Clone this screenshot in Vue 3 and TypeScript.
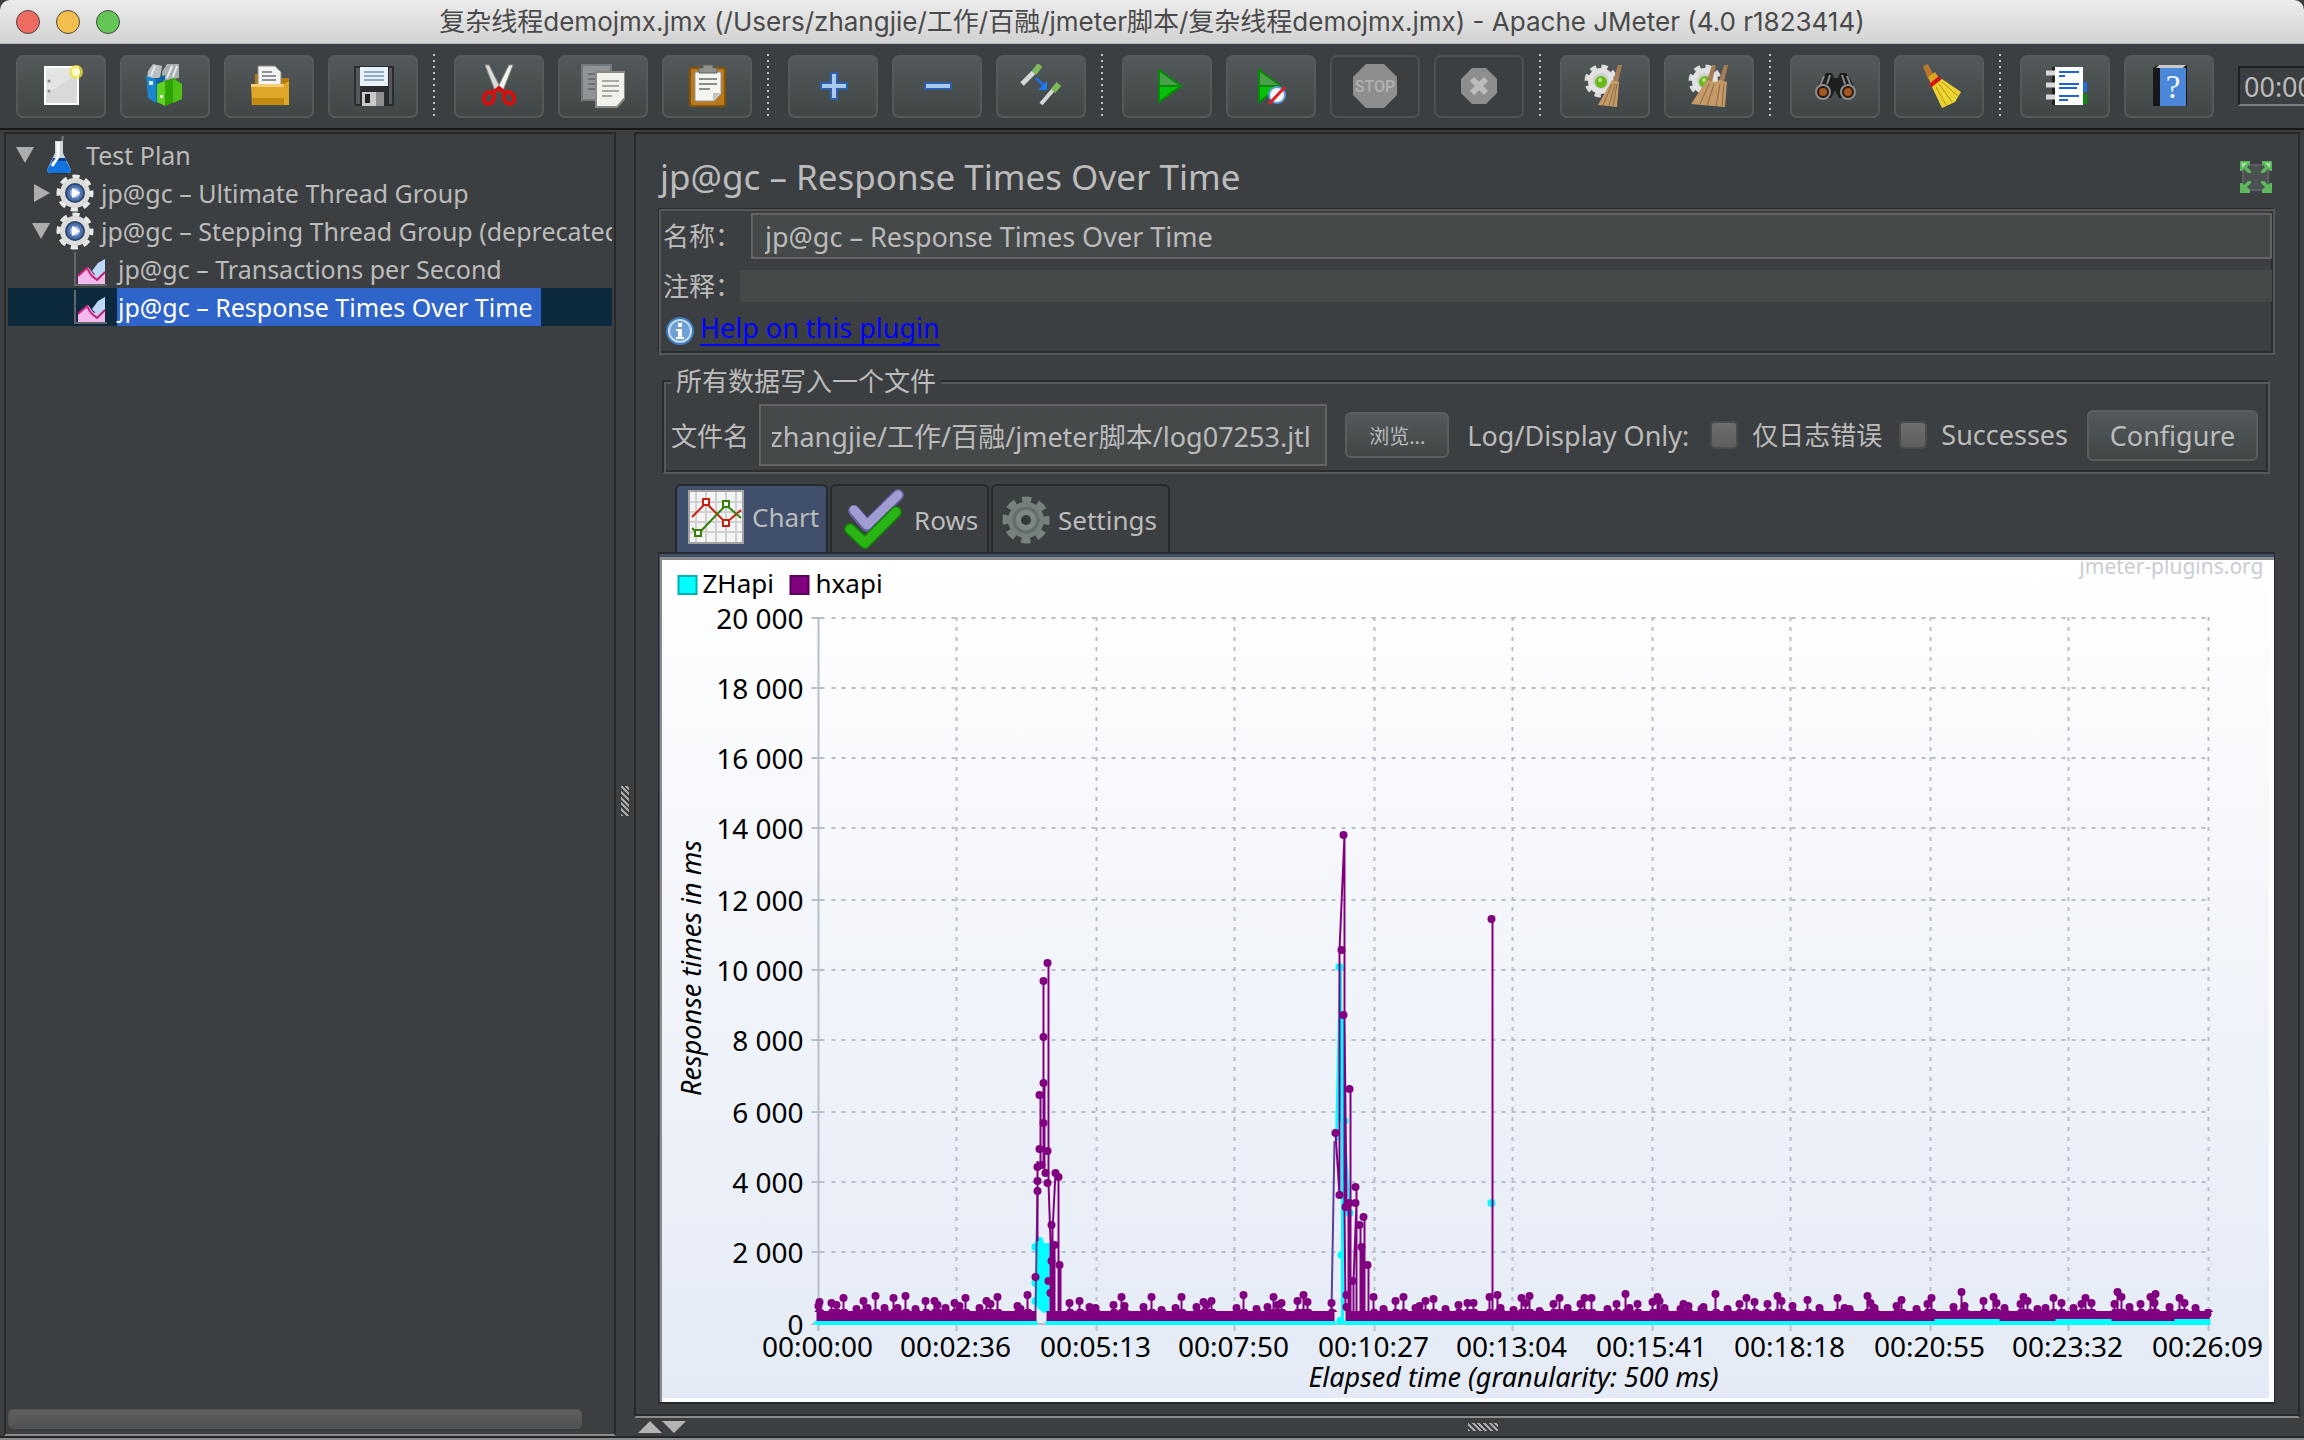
<script setup lang="ts">
import { onMounted, ref } from 'vue'

interface Tool { id: string; label: string; disabled?: boolean }

const groups: Tool[][] = [
  [
    { id: 'new', label: 'New' },
    { id: 'templates', label: 'Templates' },
    { id: 'open', label: 'Open' },
    { id: 'save', label: 'Save' },
  ],
  [
    { id: 'cut', label: 'Cut' },
    { id: 'copy', label: 'Copy' },
    { id: 'paste', label: 'Paste' },
  ],
  [
    { id: 'expand', label: 'Expand all' },
    { id: 'collapse', label: 'Collapse all' },
    { id: 'toggle', label: 'Toggle' },
  ],
  [
    { id: 'start', label: 'Start' },
    { id: 'startNoTimers', label: 'Start no pauses' },
    { id: 'stop', label: 'Stop', disabled: true },
    { id: 'shutdown', label: 'Shutdown', disabled: true },
  ],
  [
    { id: 'clear', label: 'Clear' },
    { id: 'clearAll', label: 'Clear all' },
  ],
  [
    { id: 'search', label: 'Search' },
    { id: 'resetSearch', label: 'Reset search' },
  ],
  [
    { id: 'functions', label: 'Function helper' },
    { id: 'help', label: 'Help' },
  ],
]

const gear = '<circle cx="18" cy="17" r="14" fill="none" stroke="#dedede" stroke-width="5" stroke-dasharray="6 5"/><circle cx="18" cy="17" r="13" fill="#e2e2e2"/><circle cx="18" cy="17" r="8" fill="#cfd0cf"/><circle cx="18" cy="18" r="6" fill="#69b81c"/><circle cx="17" cy="16" r="2" fill="#b4e67a"/>'
const page = (x: number, y: number, dim: boolean) =>
  `<path d="M${x} ${y}h29v26l-8 9h-21z" fill="${dim ? '#8f9496' : '#f1f1ee'}" stroke="${dim ? '#73787a' : '#8a8a80'}" stroke-width="2"/><path d="M${x + 6} ${y + 9}h17M${x + 6} ${y + 14}h17M${x + 6} ${y + 19}h17M${x + 6} ${y + 24}h10" stroke="${dim ? '#6b7072' : '#a9a9a4'}" stroke-width="2"/>`

const icons: Record<string, string> = {
  new: '<path d="M5 2h35v39H5z" fill="#fff"/><path d="M7 4h31v35H7z" fill="#e4e4e4"/><path d="M7 30L38 10v29H7z" fill="#d9d9d9"/><circle cx="10" cy="17" r="1.500" fill="#888"/><circle cx="10" cy="27" r="1.500" fill="#888"/><circle cx="37" cy="8" r="7" fill="#f3e43a" opacity=".75"/><circle cx="37" cy="8" r="4" fill="#fffbd0"/>',
  templates: '<path d="M5 7l5-7 9 2-2 12H4z" fill="#b9bfc2"/><path d="M19 8l5-8h12v14l-16 3z" fill="#a9b0b4"/><path d="M12 2L8 12M29 2l-5 12M34 2l-4 11" stroke="#e6eaec" stroke-width="2"/><path d="M3 12l10 3v24L5 34z" fill="#1b86d0"/><path d="M13 15l9-4v5l-7 3v20l-2 0z" fill="#0b63a8"/><rect x="6" y="17" width="4" height="4" fill="#d9efff"/><path d="M14 20l8-3v25l-8-4z" fill="#5fd420"/><path d="M22 17l9-3 8 6v15l-17 7z" fill="#2fa305"/><path d="M30 15l9 5v15l-9 4z" fill="#4cc014"/><rect x="17" y="31" width="3" height="3" fill="#e9ffe0"/>',
  open: '<path d="M8 10h8l3 4h23v26H8z" fill="#b87a08"/><path d="M11 2h17l6 6v15H11z" fill="#f4f4f4" stroke="#888" stroke-width="1"/><path d="M15 8h10M15 12h14M15 16h14" stroke="#8d9296" stroke-width="2"/><path d="M4 20h33l5-3v24H5z" fill="#e0a62a"/><path d="M4 20h33v3H4z" fill="#f2cf78"/><path d="M5 34h32v7H6z" fill="#c28810"/>',
  save: '<path d="M3 2h40v40H5l-2-2z" fill="#2b2c30"/><path d="M5 4h4v36H5zM38 4h3v36h-3z" fill="#56575c"/><path d="M9 3h28v19H9z" fill="#e9f1f8"/><path d="M13 8h20M13 12h20M13 16h20" stroke="#8facc6" stroke-width="2"/><path d="M11 28h22v14H11z" fill="#c9c9c9"/><path d="M25 28h8v14h-8z" fill="#8f8f8f"/><path d="M14 30h5v9h-5z" fill="#232323"/>',
  cut: '<path d="M8 1l4 0 11 22-4 6z" fill="#dcdcd8" stroke="#8c8c88" stroke-width="1"/><path d="M36 1l-4 0-11 22 4 6z" fill="#f4f4f0" stroke="#8c8c88" stroke-width="1"/><ellipse cx="12" cy="34" rx="5" ry="6" fill="none" stroke="#d40f0f" stroke-width="4" transform="rotate(22 12 34)"/><ellipse cx="32" cy="34" rx="5" ry="6" fill="none" stroke="#d40f0f" stroke-width="4" transform="rotate(-22 32 34)"/><path d="M16 29l6-5 6 5" fill="none" stroke="#d40f0f" stroke-width="4"/>',
  copy: page(1, 1, true) + page(15, 8, false),
  paste: '<rect x="5" y="4" width="35" height="38" rx="2" fill="#b87a1c" stroke="#875407" stroke-width="2"/><path d="M10 8h26v22l-7 7H10z" fill="#f4f4f1" stroke="#999" stroke-width="1"/><path d="M28 37v-8h8z" fill="#c4c4bf"/><path d="M14 15h18M14 20h18M14 25h11" stroke="#8d8d88" stroke-width="2"/><path d="M14 4h4V1h10v3h4v5H14z" fill="#8f928c" stroke="#62655f" stroke-width="1"/>',
  expand: '<path d="M9 22h28M23 8v28" stroke="#2c62ab" stroke-width="8"/><path d="M11 22h24M23 10v24" stroke="#a9c9ef" stroke-width="4"/>',
  collapse: '<path d="M9 22h28" stroke="#2c62ab" stroke-width="8"/><path d="M11 22h24" stroke="#a9c9ef" stroke-width="4"/>',
  toggle: '<path d="M3 20L15 8" stroke="#d6d8d6" stroke-width="5"/><path d="M15 9l6-8" stroke="#7db85c" stroke-width="6"/><path d="M22 40l12-14" stroke="#d6d8d6" stroke-width="4"/><path d="M34 27l6-7" stroke="#7db85c" stroke-width="6"/><path d="M17 14l8 8" stroke="#1d6fe0" stroke-width="3"/><path d="M28 17v9h-9z" fill="#1d7bf5"/>',
  start: '<path d="M13 4l25 18-25 18z" fill="#078a07"/><path d="M15 8l18 13H15z" fill="#4aa04a"/><path d="M15 23h18L15 36z" fill="#08c008"/>',
  startNoTimers: '<path d="M9 4l24 18L9 40z" fill="#078a07"/><path d="M11 8l18 13H11z" fill="#4aa04a"/><path d="M11 23h18L11 36z" fill="#08c008"/><circle cx="28" cy="31" r="8" fill="#f6f9ff" stroke="#5a9be0" stroke-width="2"/><path d="M20 40l16-17" stroke="#e02020" stroke-width="3"/>',
  stop: '<path d="M13 0h18l13 13v18L31 44H13L0 31V13z" fill="#8e8e8e"/><text x="22" y="28" text-anchor="middle" font-size="16" font-weight="500" font-family="Roboto, sans-serif" fill="#b2b2b2">STOP</text>',
  shutdown: '<path d="M15 4h14l11 11v14L29 40H15L4 29V15z" fill="#8e8e8e"/><path d="M15 15l14 14M29 15L15 29" stroke="#bcbcbc" stroke-width="6"/>',
  clear: gear + '<path d="M35 1h4l-4 17-5-1z" fill="#a67c52"/><path d="M29 16l7 2-2 25-19-2z" fill="#c39a68"/><path d="M29 20l-9 21M32 20l-6 22M34 20l-4 22" stroke="#8f6a3f" stroke-width="1"/>',
  clearAll: gear + '<path d="M25 1h4l-4 17-5-1zM37 1h4l-4 17-5-1z" fill="#a67c52"/><path d="M20 16l8 2 5-2 7 2-2 25-34-3z" fill="#c39a68"/><path d="M22 20l-9 20M27 20l-7 22M33 20l-4 22M37 20l-2 22" stroke="#8f6a3f" stroke-width="1"/>',
  search: '<path d="M7 18l6-9h6l2 5h4l2-5h6l6 9 4 10-5 6H26l-4-8-4 8H7l-5-6z" fill="#1e1e1e"/><path d="M11 12l-4 10M17 11l-3 9M29 11l3 9M34 12l4 10" stroke="#8a8a8a" stroke-width="2"/><circle cx="10" cy="28" r="7" fill="#2a1a10" stroke="#8f8f8f" stroke-width="2"/><circle cx="35" cy="28" r="7" fill="#2a1a10" stroke="#8f8f8f" stroke-width="2"/><circle cx="10" cy="28" r="4" fill="#a5561c"/><circle cx="35" cy="28" r="4" fill="#a5561c"/>',
  resetSearch: '<path d="M6 2l5-2 6 12-6 3z" fill="#b8772c"/><path d="M11 13l7-5 4 6-8 6z" fill="#dba520"/><path d="M12 20l10-8 3 4-10 8z" fill="#d01818"/><path d="M15 23l10-8 19 13-6 10-13 6z" fill="#ecd334"/><path d="M19 23l10 18M22 20l13 18M25 18l16 14" stroke="#b59510" stroke-width="1"/>',
  functions: '<path d="M38 18h6v10h-6z" fill="#1c6fe0"/><path d="M38 30h6v10h-6z" fill="#0b8b0b"/><path d="M9 3h31v38H9z" fill="#fff"/><path d="M9 3h3v38H9z" fill="#222"/><path d="M3 9h9M3 21h9M3 33h9" stroke="#d8d8d8" stroke-width="5"/><path d="M16 8h20M16 12h6M16 20h20M16 24h18M16 32h20M16 36h9" stroke="#1c62d8" stroke-width="2"/>',
  help: '<path d="M6 4l5-3h29v41H6z" fill="#16181a"/><path d="M12 1h27l-3 3H9z" fill="#c9c9c9"/><path d="M13 4h26v38H13z" fill="#4a87d8"/><text x="26" y="34" text-anchor="middle" font-size="33" font-family="Liberation Serif, serif" fill="#f2f7ff">?</text>',
}

interface TreeNode { label: string; level: number; arrow?: 'open' | 'closed'; icon: string; selected?: boolean }
const nodes: TreeNode[] = [
  { label: 'Test Plan', level: 0, arrow: 'open', icon: 'flask' },
  { label: 'jp@gc – Ultimate Thread Group', level: 1, arrow: 'closed', icon: 'gear' },
  { label: 'jp@gc – Stepping Thread Group (deprecated)', level: 1, arrow: 'open', icon: 'gear' },
  { label: 'jp@gc – Transactions per Second', level: 2, icon: 'graph' },
  { label: 'jp@gc – Response Times Over Time', level: 2, icon: 'graph', selected: true },
]
const treeIcons: Record<string, string> = {
  flask: '<ellipse cx="19" cy="35" rx="13" ry="3" fill="#25282a"/><path d="M15 5h8v12l8 17q0 3-3 3H10q-3 0-3-3l8-17z" fill="#cdd6dc"/><path d="M13 23h12l6 11q0 3-3 3H10q-3 0-3-3z" fill="#1273e0"/><path d="M13 22h12l2 3H12z" fill="#0a3f96"/><path d="M18 6v15l-6 9" stroke="#fff" stroke-width="3" fill="none"/><path d="M22 5l1-5" stroke="#777" stroke-width="2"/>',
  gear: '<circle cx="19" cy="19" r="16" fill="none" stroke="#e8e8e6" stroke-width="5" stroke-dasharray="7 5.566" stroke-dashoffset="3"/><circle cx="19" cy="19" r="15" fill="#dcdcda"/><circle cx="19" cy="19" r="9" fill="#4f72ad" stroke="#2c4674" stroke-width="2"/><circle cx="19" cy="19" r="5" fill="#a9c0e4"/><path d="M16 14l8 5-8 5z" fill="#fff"/>',
  graph: '<path d="M2 2v34" stroke="#63676a" stroke-width="2"/><path d="M2 35h32" stroke="#63676a" stroke-width="2"/><path d="M5 34V26l10-9 6 8 11-6v15z" fill="#f3b8ee"/><path d="M5 26l9-8 4 7" stroke="#c8247c" stroke-width="2" fill="none"/><path d="M19 21l6-8 7-4v13l-7 6z" fill="#bcd9fa"/><path d="M18 25l6 5 8-8" stroke="#b5236f" stroke-width="2" fill="none"/>',
}

const fileInput = ref<HTMLInputElement | null>(null)
onMounted(() => {
  // Long paths show their tail, where the file name is.
  if (fileInput.value) fileInput.value.scrollLeft = fileInput.value.scrollWidth
})

const yTicks = [617, 687, 757, 827, 899, 969, 1039, 1111, 1181, 1251, 1323].map((y, i) => ({
  y,
  label: i === 10 ? '0' : `${20 - i * 2} 000`,
}))
const xTicks = [
  [819, '00:00:00'], [957, '00:02:36'], [1097, '00:05:13'], [1235, '00:07:50'], [1375, '00:10:27'], [1513, '00:13:04'],
  [1653, '00:15:41'], [1791, '00:18:18'], [1931, '00:20:55'], [2069, '00:23:32'], [2209, '00:26:09'],
].map(([x, label]) => ({ x: Number(x), label: String(label) }))

// Peaks of the quiet stretches: x, y pairs.
const low: [number, number][] = [
  [819, 1305], [820, 1301], [832, 1302], [837, 1304], [844, 1297], [857, 1308], [864, 1300], [868, 1307], [876, 1295], [885, 1307], [894, 1297], [898, 1307],
  [906, 1295], [916, 1308], [926, 1300], [935, 1300], [938, 1304], [946, 1307], [955, 1302], [960, 1305], [966, 1297], [980, 1307], [987, 1300],
  [991, 1303], [998, 1296], [1018, 1305], [1021, 1308], [1028, 1294], [1070, 1302], [1080, 1300], [1090, 1306], [1096, 1307], [1114, 1304],
  [1122, 1296], [1125, 1305], [1144, 1306], [1152, 1296], [1162, 1309], [1176, 1307], [1182, 1296], [1197, 1306], [1204, 1301], [1207, 1304], [1212, 1300],
  [1237, 1307], [1244, 1294], [1257, 1308], [1268, 1306], [1274, 1296], [1278, 1304], [1282, 1302], [1298, 1300], [1304, 1294], [1308, 1301], [1332, 1302],
  [1374, 1296], [1384, 1308], [1396, 1300], [1404, 1296], [1416, 1307], [1420, 1305], [1426, 1300], [1434, 1298], [1446, 1308], [1459, 1304], [1468, 1302], [1474, 1302],
  [1490, 1296], [1498, 1294], [1501, 1307], [1514, 1309], [1522, 1297], [1526, 1302], [1530, 1295], [1540, 1310], [1554, 1303], [1560, 1297],
  [1568, 1307], [1581, 1303], [1585, 1297], [1592, 1297], [1608, 1308], [1617, 1303], [1626, 1293], [1630, 1307], [1638, 1303], [1653, 1301],
  [1658, 1296], [1660, 1300], [1665, 1307], [1681, 1308], [1684, 1303], [1689, 1305], [1702, 1308], [1704, 1306], [1716, 1293], [1728, 1308],
  [1740, 1303], [1747, 1297], [1755, 1301], [1768, 1303], [1778, 1295], [1782, 1300], [1793, 1305], [1808, 1299], [1820, 1307], [1838, 1297],
  [1845, 1307], [1850, 1308], [1868, 1295], [1871, 1302], [1875, 1307], [1897, 1305], [1902, 1299], [1917, 1308], [1928, 1303], [1932, 1297],
  [1954, 1306], [1962, 1291], [1965, 1305], [1984, 1300], [1994, 1296], [1997, 1302], [2005, 1307], [2021, 1303], [2024, 1296], [2028, 1300],
  [2038, 1308], [2046, 1307], [2054, 1297], [2062, 1302], [2074, 1307], [2082, 1303], [2086, 1297], [2092, 1302], [2115, 1303], [2118, 1291], [2122, 1296],
  [2130, 1306], [2141, 1303], [2151, 1296], [2156, 1293], [2155, 1302], [2170, 1306], [2180, 1297], [2185, 1302], [2196, 1307], [2208, 1313],
]
const highDots: [number, number][] = [
  [1048, 962], [1044, 980], [1044, 1036], [1044, 1082], [1040, 1094], [1044, 1122], [1040, 1148], [1048, 1150], [1038, 1166], [1042, 1164], [1046, 1172],
  [1038, 1180], [1048, 1182], [1038, 1190], [1056, 1172], [1059, 1176], [1052, 1224], [1055, 1244], [1060, 1264], [1052, 1260], [1036, 1276], [1049, 1280], [1051, 1292],
  [1344, 834], [1342, 949], [1344, 1014], [1350, 1088], [1336, 1132], [1340, 1194], [1346, 1206], [1350, 1202], [1356, 1186], [1356, 1202], [1364, 1216],
  [1360, 1224], [1362, 1246], [1368, 1264], [1353, 1280], [1347, 1294], [1347, 1306], [1492, 918],
]
const cyanDots: [number, number][] = [
  [1040, 1240], [1036, 1246], [1048, 1246], [1036, 1282], [1036, 1300], [1340, 966], [1340, 1116], [1345, 1120], [1350, 1212], [1342, 1254], [1341, 1320], [1492, 1202],
]
const lowPath = low.map(([x, y]) => `M${x} ${y}V1312`).join('')
// Shoulders that widen the foot of each peak.
const feetPath = low.map(([x]) => `M${x - 4} 1311l2-3h5l3 3z`).join('')
</script>

<template>
  <div class="window">
    <header class="titlebar">
      <div class="lights"><i class="red"></i><i class="amber"></i><i class="green"></i></div>
      <span class="title">复杂线程demojmx.jmx (/Users/zhangjie/工作/百融/jmeter脚本/复杂线程demojmx.jmx) - Apache JMeter (4.0 r1823414)</span>
    </header>

    <nav class="toolbar">
      <template v-for="(g, gi) in groups" :key="gi">
        <span v-if="gi" class="sep"></span>
        <button v-for="t in g" :key="t.id" class="tool" type="button" :aria-label="t.label" :disabled="t.disabled">
          <svg width="44" height="44" viewBox="0 0 44 44" v-html="icons[t.id]"></svg>
        </button>
      </template>
      <input class="timer" aria-label="Elapsed" value="00:00:00" readonly>
    </nav>

    <main class="main">
      <aside class="tree">
        <ul>
          <li v-for="n in nodes" :key="n.label" :class="['l' + n.level, { selected: n.selected }]">
            <svg v-if="n.arrow" class="arrow" width="18" height="18" viewBox="0 0 18 18">
              <path :d="n.arrow === 'open' ? 'M0 1h18L9 17z' : 'M2 0l16 9L2 18z'" fill="#adadad" />
            </svg>
            <svg class="node-icon" width="38" height="38" viewBox="0 0 38 38" v-html="treeIcons[n.icon]"></svg>
            <span class="node-label">{{ n.label }}</span>
          </li>
        </ul>
        <div class="thumb"></div>
      </aside>

      <div class="divider"><i class="grip tall"></i></div>

      <div class="right">
        <section class="editor">
          <div class="heading">
            <h1>jp@gc – Response Times Over Time</h1>
            <button class="full" type="button" aria-label="Maximize">
              <svg width="32" height="32" viewBox="0 0 32 32">
                <rect x="3" y="4" width="25" height="25" rx="4" fill="#4b5052" stroke="#5c6062" stroke-width="2" />
                <g fill="#5cb85a"><path d="M0 0h10v3L7 6l4 4v2H8L4 8l-2 2H0z" /><path d="M32 0H22v3l3 3-4 4v2h3l4-4 2 2h2z" /><path d="M0 32h10v-3l-3-3 4-4v-2H8l-4 4-2-2H0z" /><path d="M32 32H22v-3l3-3-4-4v-2h3l4 4 2-2h2z" /></g>
                <g fill="#a5e0a0"><path d="M2 2h5L2 7zM30 2h-5l5 5z" /></g>
              </svg>
            </button>
          </div>

          <div class="info etched">
            <div class="row name"><label for="name">名称：</label><input id="name" value="jp@gc – Response Times Over Time"></div>
            <div class="row comment"><label for="comment">注释：</label><input id="comment" value=""></div>
            <div class="help">
              <svg width="28" height="28" viewBox="0 0 28 28">
                <circle cx="14" cy="14" r="14" fill="#3f7dbd" /><circle cx="14" cy="14" r="11" fill="#6fa0d4" stroke="#c4dbf2" stroke-width="2" />
                <path d="M12 6h4v4h-4zM10 12h6v8h2v2h-8v-2h2v-6h-2z" fill="#fff" />
              </svg>
              <a href="#">Help on this plugin</a>
            </div>
          </div>

          <fieldset class="etched">
            <legend>所有数据写入一个文件</legend>
            <div class="file">
              <label for="file">文件名</label>
              <input id="file" ref="fileInput" class="path" value="/Users/zhangjie/工作/百融/jmeter脚本/log07253.jtl">
              <button class="btn browse" type="button">浏览...</button>
              <span class="only">Log/Display Only:</span>
              <label class="check cjk"><input type="checkbox"><span>仅日志错误</span></label>
              <label class="check"><input type="checkbox"><span>Successes</span></label>
              <button class="btn configure" type="button">Configure</button>
            </div>
          </fieldset>

          <div class="tabs">
            <button class="tab chart-tab" type="button">
              <svg width="56" height="54" viewBox="0 0 56 54">
                <rect x="1" y="1" width="54" height="52" fill="#f4f4f4" stroke="#a3a3a3" stroke-width="2" />
                <path d="M8 2v50M18 2v50M28 2v50M38 2v50M48 2v50M2 12h52M2 22h52M2 32h52M2 42h52" stroke="#d0d0d0" stroke-width="2" />
                <path d="M4 27l14-14 20 20 15-13" fill="none" stroke="#c82010" stroke-width="2" />
                <path d="M4 38l6 6 28-29 15 13" fill="none" stroke="#378008" stroke-width="2" />
                <g stroke="#c82010" stroke-width="2" fill="#fff"><path d="M15 9h6v6h-6zM35 30h6v6h-6z" /></g>
                <g stroke="#378008" stroke-width="2" fill="#fff"><path d="M7 40h6v6H7zM35 11h6v6h-6z" /></g>
              </svg>
              <span>Chart</span>
            </button>
            <button class="tab rows-tab" type="button">
              <svg width="60" height="62" viewBox="0 0 60 62">
                <g fill="none" stroke-linecap="round" stroke-linejoin="round">
                  <path d="M10 22l13 15L54 6" stroke="#5f5d9c" stroke-width="12" /><path d="M10 21l13 15L54 6" stroke="#9f9dd2" stroke-width="9" />
                  <path d="M6 40l15 14 31-31" stroke="#14800a" stroke-width="12" /><path d="M6 40l15 14 31-31" stroke="#2bb416" stroke-width="9" />
                </g>
              </svg>
              <span>Rows</span>
            </button>
            <button class="tab settings-tab" type="button">
              <svg width="48" height="48" viewBox="0 0 48 48">
                <circle cx="24" cy="24" r="20" fill="none" stroke="#77827f" stroke-width="7" stroke-dasharray="9 6.708" stroke-dashoffset="4.500" />
                <circle cx="24" cy="24" r="18" fill="#75807d" /><circle cx="24" cy="24" r="12" fill="none" stroke="#626c69" stroke-width="3" />
                <circle cx="24" cy="24" r="10" fill="#7d8884" /><circle cx="24" cy="24" r="5" fill="#35393a" />
              </svg>
              <span>Settings</span>
            </button>
          </div>

          <div class="pane">
            <div class="frame">
              <svg class="chart" viewBox="663 559 1606 838">
                <text class="mark" x="2264" y="573" text-anchor="end">jmeter-plugins.org</text>
                <rect x="679" y="575" width="18" height="18" fill="#00ffff" stroke="#00b2b2" stroke-width="2" />
                <text x="703" y="592" class="legend">ZHapi</text>
                <rect x="791" y="575" width="18" height="18" fill="#800080" stroke="#590059" stroke-width="2" />
                <text x="816" y="592" class="legend">hxapi</text>

                <g stroke="#b8bfca" stroke-width="2">
                  <template v-for="t in yTicks" :key="t.y">
                    <path :d="`M812 ${t.y}h13`" />
                    <path v-if="t.y < 1323" :d="`M832 ${t.y}H2209`" stroke-dasharray="4 6" />
                  </template>
                  <template v-for="t in xTicks" :key="t.x">
                    <path v-if="t.x > 819" :d="`M${t.x} 616V1320`" stroke-dasharray="4 6" />
                    <path :d="`M${t.x} 1320v10`" />
                  </template>
                  <path d="M819 616V1330M819 1323H2209" />
                </g>
                <g class="num">
                  <text v-for="t in yTicks" :key="t.y" x="804" :y="t.y + 11" text-anchor="end">{{ t.label }}</text>
                  <text v-for="t in xTicks" :key="t.x" :x="t.x - 1" y="1356" text-anchor="middle">{{ t.label }}</text>
                </g>
                <text class="axis" x="1514" y="1386" text-anchor="middle">Elapsed time (granularity: 500 ms)</text>
                <text class="axis" transform="translate(701 967) rotate(-90)" text-anchor="middle">Response times in ms</text>

                <!-- ZHapi -->
                <g fill="none" stroke="#00ffff">
                  <path d="M815 1322H1038M1046 1322H1336M1345 1322H2211" stroke-width="4" />
                  <path d="M1337 1140L1341 966V1110M1343 1014V1322" stroke-width="3" />
                  <path d="M1345 1120L1350 1212" stroke-width="2" />
                </g>
                <path d="M1036 1244l4-6 8 6 2 8v58l-6 2-7-6z" fill="#00ffff" />
                <circle v-for="(d, i) in cyanDots" :key="i" :cx="d[0]" :cy="d[1]" r="4" fill="#00ffff" />

                <!-- hxapi -->
                <path d="M817 1310H1037V1320H817zM1047 1310H1335V1320H1047zM1346 1310H2210V1320H1346z" fill="#800080" />
                <path d="M1935 1319H2000M2056 1319H2112M2175 1319H2211" stroke="#00ffff" stroke-width="2" />
                <path d="M1335 1140L1332 1310M1038 1190L1036 1310" stroke="#5a3f9c" stroke-width="2" fill="none" />
                <path :d="lowPath" stroke="#800080" stroke-width="2" />
                <path :d="feetPath" fill="#800080" />
                <path
                  d="M1038 1160V1240M1041 1094V1168M1044 980V1165M1049 962V1182M1045 1080V1172M1049 1182L1051 1240V1310M1056 1172L1053 1230V1310M1059 1176V1310M1055 1244V1310M1061 1264V1310M1336 1132L1340 1194V949L1345 834V1206L1346 1310M1345 834V1014L1347 1206M1351 1088V1310M1357 1186V1310M1357 1202L1354 1280V1310M1361 1224V1310M1365 1216V1310M1363 1246V1310M1369 1264V1310M1349 1205V1310M1493 918V1310"
                  fill="none" stroke="#800080" stroke-width="2"
                />
                <g fill="#800080">
                  <circle v-for="(d, i) in low" :key="i" :cx="d[0]" :cy="d[1]" r="4" />
                  <circle v-for="(d, i) in highDots" :key="i" :cx="d[0]" :cy="d[1]" r="4" />
                </g>
              </svg>
            </div>
          </div>
        </section>
        <div class="splitbar">
          <svg width="48" height="12" viewBox="0 0 48 12"><path d="M12 0l12 12H0zM24 0h24L36 12z" fill="#b4b4b4" /></svg>
          <i class="grip wide"></i>
        </div>
      </div>
    </main>
  </div>
</template>

<style>
body { background: #3c3f41; }
</style>

<style scoped>
* { box-sizing: border-box; }
.window {
  height: 100vh; display: flex; flex-direction: column; overflow: hidden;
  background: #3c3f41; color: #bbb; border-bottom: 2px solid #8c8c8c;
  font-family: "Noto Sans", "Noto Sans CJK SC", sans-serif; font-size: 27px;
}
button, input { font: inherit; color: inherit; }
svg { display: block; flex: none; }

.titlebar { height: 44px; flex: none; position: relative; display: flex; align-items: center; justify-content: center; background: linear-gradient(#ececec, #d2d2d2); border-bottom: 1px solid #b5b5b5; border-radius: 10px 10px 0 0; color: #4a4a4a; }
.title { font: 26px/44px Inter, "Noto Sans CJK SC", sans-serif; white-space: nowrap; }
.lights { position: absolute; left: 16px; top: 10px; display: flex; gap: 16px; }
.lights i { width: 24px; height: 24px; border-radius: 50%; border: 1px solid; }
.red { background: #ed6b60; border-color: #d35a50; }
.amber { background: #f5bf4f; border-color: #d8a03a; }
.green { background: #62c554; border-color: #4fa842; }

.toolbar { height: 86px; flex: none; display: flex; align-items: center; gap: 14px; padding: 0 0 0 16px; border-bottom: 2px solid #18191b; overflow: hidden; }
.tool { width: 90px; height: 63px; flex: none; padding: 0; display: flex; align-items: center; justify-content: center; border: 2px solid #56595b; border-radius: 7px; background: linear-gradient(#53585a, #414647); }
.tool:disabled { background: none; border-color: #4d5051; }
.sep { width: 8px; height: 64px; flex: none; background: repeating-linear-gradient(#c0c0c0 0 2px, transparent 2px 6px) 1px 0 / 2px 100% no-repeat; }
.timer { width: 124px; height: 40px; flex: none; margin-left: 10px; padding: 0 4px; border: 2px solid #1e2021; border-bottom-color: #7d8082; background: #3c3f41; }

.main { flex: 1; min-height: 0; display: flex; padding: 2px 4px 0; border-bottom: 2px solid #232526; }
.tree { width: 612px; flex: none; display: flex; flex-direction: column; justify-content: space-between; border: 2px solid #27292b; border-bottom: 2px solid #8c8c8c; padding: 2px 2px 5px; overflow: hidden; }
ul { list-style: none; margin: 0; padding: 0; font-size: 25px; }
li { height: 38px; display: flex; align-items: center; overflow: hidden; white-space: nowrap; line-height: 38px; }
.l0 { padding-left: 8px; }
.l1 { padding-left: 24px; }
.l2 { padding-left: 65px; }
.node-icon { margin-left: 6px; }
.l2 .node-icon { margin-left: 0; }
.node-label { margin-left: 7px; }
.l0 .node-label { margin-left: 8px; }
.l2 .node-label { margin-left: 6px; padding: 0 8px 0 1px; }
.selected { background: #0d293e; color: #fff; }
.selected .node-label { background: #2f65ca; }
.thumb { width: 574px; height: 20px; border-radius: 5px; background: linear-gradient(#5f5f5f, #515151); border: 1px solid #535657; }

.divider { width: 18px; flex: none; display: flex; align-items: center; justify-content: center; }
.grip { background: repeating-linear-gradient(45deg, #a8a8a8 0 2px, #3c3f41 2px 4px); }
.tall { width: 8px; height: 30px; margin-top: 34px; }
.wide { width: 30px; height: 8px; margin-left: 30px; }

.right { flex: 1; min-width: 0; display: flex; flex-direction: column; }
.editor { flex: 1; min-height: 0; display: flex; flex-direction: column; border: 2px solid #27292b; border-bottom: 2px solid #8c8c8c; padding: 0 23px 12px 22px; box-shadow: inset 0 -2px #27292b; }
.heading { height: 74px; flex: none; display: flex; align-items: center; justify-content: space-between; padding-top: 12px; }
h1 { margin: 0 0 0 2px; font-size: 35px; line-height: 48px; font-weight: 400; }
.full { width: 32px; height: 32px; padding: 0; border: 0; background: none; margin-right: 3px; }

.etched { border: 2px solid; border-color: #2a2c2e #54585a #54585a #2a2c2e; box-shadow: inset 2px 2px #54585a, inset -2px -2px #2a2c2e; }
.info { border-top-width: 1px; border-left-width: 1px; padding: 4px 1px 7px 2px; flex: none; }
.row { display: flex; align-items: center; }
.row label { width: 90px; padding-left: 2px; font-size: 26px; line-height: 32px; white-space: nowrap; }
.row input { flex: 1; min-width: 0; background: #45494a; border: 0; padding: 0 12px; }
.name input { height: 46px; border: 2px solid #646464; }
.comment { margin-top: 11px; }
.comment label { width: 79px; }
.comment input { height: 32px; }
.help { display: flex; align-items: center; gap: 6px; height: 36px; margin: 8px 0 0 5px; line-height: 36px; }
.help svg { margin-top: 6px; }
.help a { color: #00f; text-decoration-thickness: 2px; text-underline-offset: 6px; text-decoration-skip-ink: none; }

fieldset { margin: 13px 5px 0 4px; min-width: 0; flex: none; padding: 10px 10px 6px 7px; }
legend { margin-left: 0; padding: 0 5px; font-size: 26px; line-height: 26px; background: #3c3f41; }
.file { display: flex; align-items: center; font-size: 27px; white-space: nowrap; }
.file > label:first-child { width: 88px; font-size: 26px; }
.path { flex: 1; min-width: 0; height: 62px; background: #45494a; border: 2px solid #646464; padding: 0 14px 0 11px; }
.btn { padding: 0; flex: none; border: 2px solid #5a5e60; border-radius: 6px; background: linear-gradient(#53585a, #414647); }
.browse { width: 104px; height: 46px; margin-left: 18px; font-size: 20px; }
.only { width: 226px; margin-left: 18px; }
.check { display: flex; align-items: center; gap: 14px; margin-left: 17px; line-height: 36px; }
.cjk { font-size: 26px; }
.check input { appearance: none; margin: 0; width: 28px; height: 28px; border: 2px solid #4a4d4e; border-radius: 5px; background: linear-gradient(#6e6e6e, #5e5e5e); }
.configure { width: 171px; height: 51px; margin-left: 19px; }

.tabs { display: flex; gap: 2px; height: 68px; flex: none; margin: 10px 0 0 17px; }
.tab { display: flex; align-items: center; padding: 0; background: none; border: 2px solid #27292b; border-bottom: 0; border-radius: 6px 6px 0 0; font-size: 26px; line-height: 36px; }
.chart-tab { width: 153px; background: #40506c; padding: 0 0 4px 11px; gap: 8px; }
.rows-tab { width: 159px; padding: 2px 0 0 12px; gap: 10px; }
.settings-tab { width: 179px; padding: 2px 0 0 9px; gap: 8px; }
.pane { flex: 1; min-height: 0; border: 2px solid #27292b; border-left-width: 1px; border-right-width: 1px; background: #40506c; padding: 3px 0 0 1px; }
.frame { height: 100%; background: #fff; border: solid #8b8b8b; border-width: 3px 0 0 2px; padding: 0 5px 4px 0; }
.chart { width: 100%; height: 100%; background: linear-gradient(#fff, #f1f4fa 50%, #e4ebf6); }
.legend { font-size: 26px; fill: #000; }
.num { font-size: 28px; fill: #000; }
.axis { font-size: 27px; font-style: italic; fill: #000; }
.mark { font-size: 21px; fill: #c9ccd4; }

.splitbar { height: 18px; flex: none; display: grid; grid-template-columns: 1fr auto 1fr; align-items: center; padding: 0 2px 0 4px; }
</style>
